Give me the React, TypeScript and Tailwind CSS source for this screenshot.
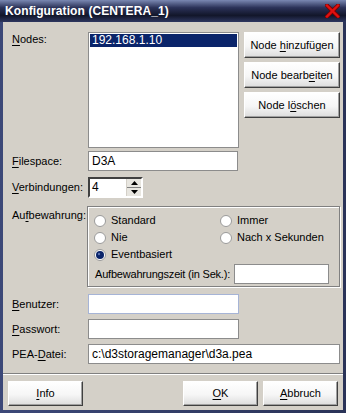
import React from "react";

const U = ({ children }: { children: React.ReactNode }) => (
  <span className="underline underline-offset-[2px] decoration-[1px]">{children}</span>
);

const Btn = ({ children, className = "" }: { children: React.ReactNode; className?: string }) => (
  <div
    className={
      "flex items-center justify-center border border-t-white border-l-white border-r-[#404040] border-b-[#404040] bg-[linear-gradient(#ffffff,#f6f6f6_55%,#dcdcdc)] shadow-[inset_-1px_-1px_0_#a0a0a0] text-black whitespace-nowrap " +
      className
    }
  >
    {children}
  </div>
);

const Radio = ({ checked = false }: { checked?: boolean }) => (
  <svg width="12" height="12" viewBox="0 0 12 12" className="shrink-0">
    <circle cx="6" cy="6" r="5.5" fill="#ffffff" stroke="#9a9a9a" />
    {checked && <circle cx="6" cy="6" r="4" fill="#0a246a" />}
    {checked && <circle cx="5" cy="5" r="1.2" fill="#5a72b0" />}
  </svg>
);

const Label = ({ children }: { children: React.ReactNode }) => (
  <div className="w-[76px] shrink-0 whitespace-nowrap">{children}</div>
);

export default function App() {
  return (
    <div
      className="w-[346px] h-[413px] flex flex-col text-[11px] leading-[13px]"
      style={{ fontFamily: '"Liberation Sans", Arial, sans-serif' }}
    >
      {/* Title bar */}
      <div className="h-[22px] shrink-0 flex items-center justify-between pl-[5px] pr-[6px] bg-[linear-gradient(#7a88b2,#2b3258_35%,#12162a_70%,#2e3760)]">
        <span className="text-white font-bold text-[12px] tracking-[0.1px] pt-[1px]">
          Konfiguration (CENTERA_1)
        </span>
        <svg width="15" height="14" viewBox="0 0 15 14">
          <path d="M2 1.5 L13 12.5 M13 1.5 L2 12.5" stroke="#7a0000" strokeWidth="4" strokeLinecap="square" />
          <path d="M2 1.5 L13 12.5 M13 1.5 L2 12.5" stroke="#e01010" strokeWidth="2.4" strokeLinecap="square" />
        </svg>
      </div>

      {/* Frame */}
      <div className="flex-1 flex flex-col bg-[linear-gradient(90deg,#3c4878,#2a3358)] px-[3px] pb-[3px]">
        <div className="flex-1 flex flex-col bg-[#d4d0c8] text-black">
          <div className="flex flex-col pl-[9px] pr-[3px] pt-[10px]">
            {/* Nodes */}
            <div className="flex">
              <Label>
                <div className="pt-[1px]">
                  <U>N</U>odes:
                </div>
              </Label>
              <div className="w-[151px] h-[116px] border border-[#8c8c8c] bg-white p-[1px]">
                <div className="h-[13px] bg-[#0a246a] text-white pl-[2px] text-[12px] leading-[13px]">192.168.1.10</div>
              </div>
              <div className="ml-[5px] w-[96px] flex flex-col gap-[4px]">
                <Btn className="h-[26px]">
                  Node&nbsp;<U>h</U>inzufügen
                </Btn>
                <Btn className="h-[26px]">
                  Node bearb<U>e</U>iten
                </Btn>
                <Btn className="h-[26px]">
                  Node l<U>ö</U>schen
                </Btn>
              </div>
            </div>

            {/* Filespace */}
            <div className="flex items-center mt-[3px] h-[20px]">
              <Label>
                <U>F</U>ilespace:
              </Label>
              <div className="w-[150px] h-[20px] border border-[#8c8c8c] bg-white flex items-center pl-[3px] text-[12px]">
                D3A
              </div>
            </div>

            {/* Verbindungen */}
            <div className="flex items-center mt-[6px] h-[21px]">
              <Label>
                <U>V</U>erbindungen:
              </Label>
              <div className="w-[55px] h-[21px] border-2 border-t-[#404040] border-l-[#404040] border-b-white border-r-white bg-white flex items-center justify-between">
                <span className="pl-[2px] text-[12px]">4</span>
                <div className="flex flex-col w-[15px] h-[17px] border-l border-[#d4d0c8]">
                  <div className="flex-1 flex items-center justify-center bg-[#e8e6e0] border-b border-[#808080]">
                    <svg width="7" height="4" viewBox="0 0 7 4">
                      <path d="M3.5 0 L7 4 L0 4 Z" fill="#000" />
                    </svg>
                  </div>
                  <div className="flex-1 flex items-center justify-center bg-[#e8e6e0]">
                    <svg width="7" height="4" viewBox="0 0 7 4">
                      <path d="M0 0 L7 0 L3.5 4 Z" fill="#000" />
                    </svg>
                  </div>
                </div>
              </div>
            </div>

            {/* Aufbewahrung */}
            <div className="flex mt-[8px]">
              <div className="w-[75px] shrink-0 pt-[3px] whitespace-nowrap">
                Au<U>f</U>bewahrung:
              </div>
              <div className="w-[254px] h-[81px] border border-[#808080] shadow-[inset_1px_1px_0_#ffffff,1px_1px_0_#ffffff] pl-[6px] pt-[7px]">
                <div className="grid grid-cols-[126px_1fr] gap-y-[4px]">
                  <div className="flex items-center gap-[5px] h-[13px]">
                    <Radio /> Standard
                  </div>
                  <div className="flex items-center gap-[5px] h-[13px]">
                    <Radio /> Immer
                  </div>
                  <div className="flex items-center gap-[5px] h-[13px]">
                    <Radio /> Nie
                  </div>
                  <div className="flex items-center gap-[5px] h-[13px]">
                    <Radio /> Nach x Sekunden
                  </div>
                  <div className="flex items-center gap-[5px] h-[13px]">
                    <Radio checked /> Eventbasiert
                  </div>
                </div>
                <div className="flex items-center mt-[3px]">
                  <span className="w-[140px] shrink-0 pl-[1px] whitespace-nowrap tracking-[-0.2px]">
                    Aufbewahrungszeit (in Sek.):
                  </span>
                  <div className="w-[95px] h-[20px] shrink-0 border border-[#8c8c8c] bg-white" />
                </div>
              </div>
            </div>

            {/* Benutzer */}
            <div className="flex items-center mt-[7px] h-[20px]">
              <Label>
                <U>B</U>enutzer:
              </Label>
              <div className="w-[151px] h-[20px] border border-[#a6b4d6] bg-white" />
            </div>
            <div className="flex items-center mt-[5px] h-[20px]">
              <Label>
                <U>P</U>asswort:
              </Label>
              <div className="w-[151px] h-[20px] border border-[#8c8c8c] bg-white" />
            </div>
            <div className="flex items-center mt-[5px] h-[20px]">
              <Label>
                PEA-<U>D</U>atei:
              </Label>
              <div className="w-[252px] h-[20px] border border-[#8c8c8c] bg-white flex items-center pl-[3px] text-[12px]">
                c:\d3storagemanager\d3a.pea
              </div>
            </div>
          </div>

          {/* Separator */}
          <div className="mt-[9px] h-[2px] border-t border-t-[#808080] border-b border-b-white" />

          {/* Bottom buttons */}
          <div className="flex items-center px-[5px] mt-[6px]">
            <Btn className="w-[75px] h-[25px]">
              <U>I</U>nfo
            </Btn>
            <div className="flex-1" />
            <Btn className="w-[75px] h-[25px]">
              <U>O</U>K
            </Btn>
            <Btn className="w-[75px] h-[25px] ml-[5px]">
              <U>A</U>bbruch
            </Btn>
          </div>
        </div>
      </div>
    </div>
  );
}
